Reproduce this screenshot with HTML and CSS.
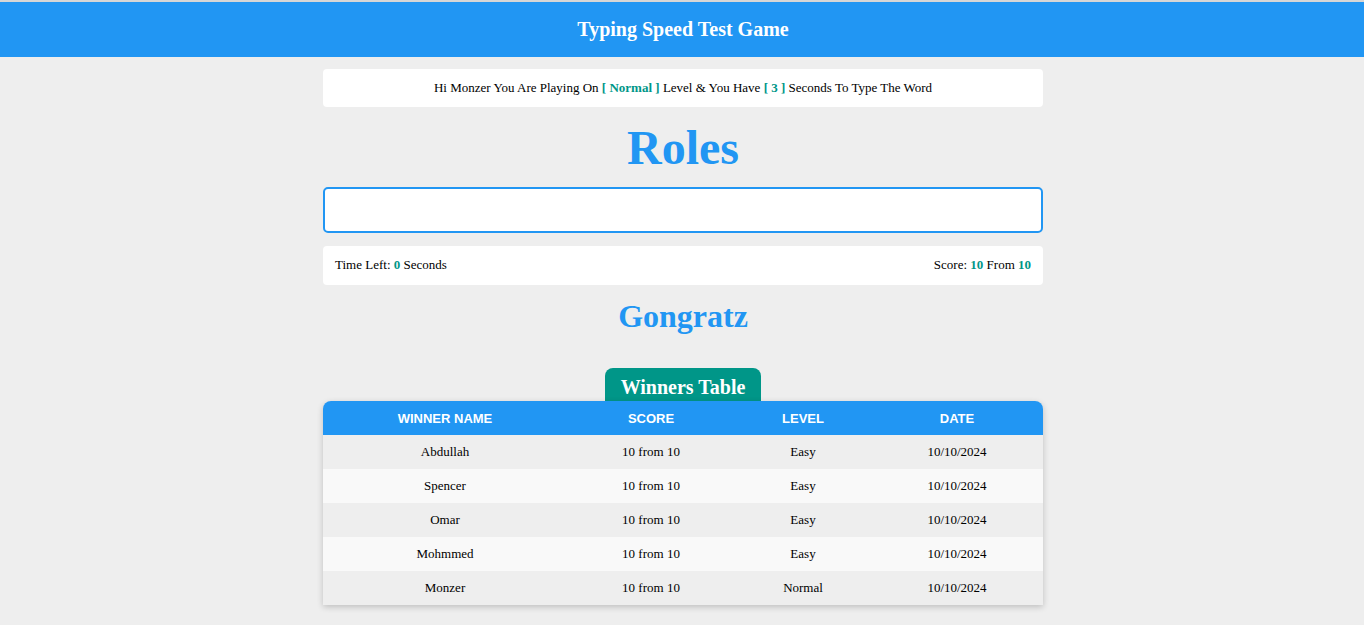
FILE: index.html
```html
<!DOCTYPE html>
<html>
<head>
<meta charset="utf-8">
<title>Typing Speed Test Game</title>
<link rel="stylesheet" href="styles.css">
</head>
<body>
<div class="topline"></div>
<header class="site-header"><span class="site-title">Typing Speed Test Game</span></header>
<main class="game">
  <div class="message">Hi Monzer You Are Playing On <span class="hl">[ Normal ]</span> Level &amp; You Have <span class="hl">[ 3 ]</span> Seconds To Type The Word</div>
  <div class="the-word">Roles</div>
  <input class="input" type="text">
  <div class="control">
    <div class="time">Time Left: <span class="hl">0</span> Seconds</div>
    <div class="score">Score: <span class="hl">10</span> From <span class="hl">10</span></div>
  </div>
  <div class="finish">Gongratz</div>
  <section class="winners">
    <div class="tab">Winners Table</div>
    <table class="table">
      <thead>
        <tr><th class="c1">Winner Name</th><th class="c2">Score</th><th class="c3">Level</th><th class="c4">Date</th></tr>
      </thead>
      <tbody>
        <tr><td>Abdullah</td><td>10 from 10</td><td>Easy</td><td>10/10/2024</td></tr>
        <tr><td>Spencer</td><td>10 from 10</td><td>Easy</td><td>10/10/2024</td></tr>
        <tr><td>Omar</td><td>10 from 10</td><td>Easy</td><td>10/10/2024</td></tr>
        <tr><td>Mohmmed</td><td>10 from 10</td><td>Easy</td><td>10/10/2024</td></tr>
        <tr><td>Monzer</td><td>10 from 10</td><td>Normal</td><td>10/10/2024</td></tr>
      </tbody>
    </table>
  </section>
</main>
</body>
</html>
```
FILE: styles.css
```css
* { box-sizing: border-box; }
body {
  margin: 0;
  background: #eeeeee;
  font-family: "Liberation Serif", "Times New Roman", serif;
  color: #000;
}
.topline { height: 2px; background: #d6d6d6; }
.site-header {
  background: #2196f3;
  color: #fff;
  height: 55px;
  display: flex;
  align-items: center;
  justify-content: center;
  padding-left: 2px;
  font-size: 20px;
  font-weight: bold;
}
.game {
  width: 720px;
  margin: 12px 0 0 calc(50% - 359px);
  display: flex;
  flex-direction: column;
}
.hl { color: #009688; font-weight: bold; }
.message {
  background: #fff;
  border-radius: 4px;
  height: 38px;
  line-height: 38px;
  text-align: center;
  font-size: 13px;
}
.the-word {
  text-align: center;
  color: #2196f3;
  font-size: 48px;
  font-weight: bold;
  margin-top: 13px;
  line-height: 56px;
}
.input {
  margin-top: 11px;
  width: 100%;
  height: 46px;
  border: 2px solid #2196f3;
  border-radius: 5px;
  background: #fff;
  outline: none;
  font-size: 20px;
  padding: 0 10px;
}
.control {
  margin-top: 13px;
  background: #fff;
  border-radius: 4px;
  height: 39px;
  display: flex;
  align-items: center;
  justify-content: space-between;
  padding: 0 12px 1px;
  font-size: 13px;
}
.finish {
  text-align: center;
  color: #2196f3;
  font-size: 32px;
  font-weight: bold;
  margin-top: 11px;
  line-height: 40px;
}
.winners {
  margin-top: 32px;
  display: flex;
  flex-direction: column;
  align-items: center;
  margin-bottom: 20px;
}
.tab {
  background: #009688;
  color: #fff;
  font-size: 20px;
  font-weight: bold;
  padding: 0 16px;
  height: 33px;
  line-height: 38px;
  border-radius: 8px 8px 0 0;
}
.table {
  width: 100%;
  border-collapse: collapse;
  border-radius: 8px 8px 0 0;
  overflow: hidden;
  box-shadow: 0 2px 6px rgba(0,0,0,0.2);
  font-size: 13px;
}
.table th {
  background: #2196f3;
  color: #fff;
  font-family: "Liberation Sans", Arial, sans-serif;
  font-weight: bold;
  text-transform: uppercase;
  font-size: 13px;
  height: 34px;
}
.c1 { width: 244px; }
.c2 { width: 168px; }
.c3 { width: 136px; }
.c4 { width: 172px; }
.table td {
  text-align: center;
  height: 34px;
}
.table tbody tr:nth-child(odd) td { background: #eeeeee; }
.table tbody tr:nth-child(even) td { background: #f9f9f9; }
```
